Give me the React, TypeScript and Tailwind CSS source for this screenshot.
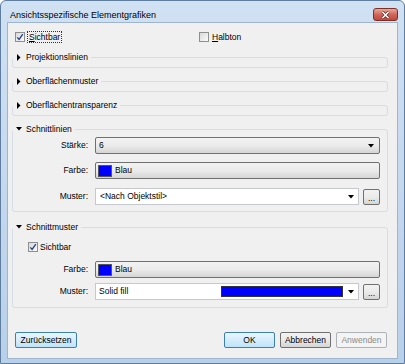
import React from "react";

function Check({ checked }: { checked?: boolean }) {
  return (
    <span className="flex h-[10px] w-[10px] shrink-0 items-center justify-center border border-[#8e8f8f] bg-gradient-to-br from-[#d9d9d9] to-[#fbfbfb]">
      {checked && (
        <svg width="8" height="8" viewBox="0 0 8 8">
          <path d="M1.3 4.3 L3.1 6.4 L6.8 1.1" fill="none" stroke="#21418f" strokeWidth="1.3" />
        </svg>
      )}
    </span>
  );
}

function Arrow() {
  return (
    <svg width="6" height="4" viewBox="0 0 6 4" className="shrink-0">
      <path d="M0 0 H6 L3 3.5 Z" fill="#000" />
    </svg>
  );
}

function Group({
  title,
  open,
  children,
}: {
  title: string;
  open?: boolean;
  children?: React.ReactNode;
}) {
  return (
    <fieldset className="ml-[4px] mr-[9px] rounded-[3px] border border-[#d6dee5] px-0 pb-[4px]">
      <legend className="p-0">
        <div className="flex h-[12px] items-center bg-[#f0f0f0] pr-[3px]">
          <span className="flex h-[12px] w-[11px] items-center justify-center">
            {open ? (
              <svg width="6" height="4" viewBox="0 0 6 4">
                <path d="M0 0 H6 L3 3.5 Z" fill="#000" />
              </svg>
            ) : (
              <svg width="4" height="7" viewBox="0 0 4 7">
                <path d="M0 0 V7 L3.5 3.5 Z" fill="#000" />
              </svg>
            )}
          </span>
          <span className="ml-[2px] leading-[12px]">{title}</span>
        </div>
      </legend>
      {children}
    </fieldset>
  );
}

function Row({ label, children, className }: { label: string; children: React.ReactNode; className?: string }) {
  return (
    <div className={"flex h-[17px] items-center pr-[7px] " + (className ?? "")}>
      <div className="w-[75px] text-right">{label}</div>
      <div className="ml-[7px] flex h-full flex-1 items-center">{children}</div>
    </div>
  );
}

const btnGray =
  "border border-[#707070] rounded-[2px] bg-gradient-to-b from-[#f2f2f2] via-[#ebebeb] to-[#d5d5d5]";

function DotsButton() {
  return (
    <div className={"ml-[4px] flex h-[16px] w-[17px] items-end justify-center pb-[3px] leading-[6px] " + btnGray}>
      ...
    </div>
  );
}

function Swatch() {
  return <span className="h-[12px] w-[14px] border border-[#555] bg-[#0000ff]" />;
}

export default function App() {
  return (
    <div className="flex h-[364px] w-[405px] flex-col rounded-t-[6px] border border-[#5f7d9e] bg-gradient-to-b from-[#d0e1f3] to-[#b9d0ea] font-['Liberation_Sans',Arial,sans-serif] text-[8.5px] text-black">
      {/* title bar */}
      <div className="flex h-[21px] shrink-0 items-end justify-between pl-[9px] pr-[6px]">
        <span className="mb-[1px] text-[9px] leading-[12px]">Ansichtsspezifische Elementgrafiken</span>
        <div className="mb-[1px] flex h-[13px] w-[25px] items-center justify-center rounded-[3px] border border-[#7a3228] bg-gradient-to-b from-[#e9a89a] via-[#d0665a] to-[#c2473a]">
          <svg width="9" height="8" viewBox="0 0 9 8">
            <path d="M1.5 1 L7.5 7 M7.5 1 L1.5 7" stroke="#5b2a22" strokeWidth="3" />
            <path d="M1.5 1 L7.5 7 M7.5 1 L1.5 7" stroke="#fff" strokeWidth="1.6" />
          </svg>
        </div>
      </div>

      {/* client area */}
      <div className="mx-[6px] mb-[4px] flex flex-1 flex-col border border-[#9fb5cd] bg-[#f0f0f0]">
        <div className="mt-[8px] flex h-[12px] items-center">
          <div className="flex w-[191px] items-center pl-[7px]">
            <Check checked />
            <span className="ml-[2px] border border-dotted border-[#333] px-[1px] leading-[10px]">
              <u>S</u>ichtbar
            </span>
          </div>
          <div className="flex items-center">
            <Check />
            <span className="ml-[3px] leading-[10px]">
              <u>H</u>albton
            </span>
          </div>
        </div>

        <div className="mt-[8px]">
          <Group title="Projektionslinien" />
        </div>
        <div className="mt-[7px]">
          <Group title="Oberflächenmuster" />
        </div>
        <div className="mt-[7px]">
          <Group title="Oberflächentransparenz" />
        </div>

        <div className="mt-[7px]">
          <Group title="Schnittlinien" open>
            <div className="pb-[2px]">
              <Row label="Stärke:" className="mt-[2px]">
                <div className={"flex h-full flex-1 items-center justify-between pl-[3px] pr-[5px] " + btnGray}>
                  <span>6</span>
                  <Arrow />
                </div>
              </Row>
              <Row label="Farbe:" className="mt-[8px]">
                <div className={"flex h-full flex-1 items-center pl-[2px] " + btnGray}>
                  <Swatch />
                  <span className="ml-[3px]">Blau</span>
                </div>
              </Row>
              <Row label="Muster:" className="mt-[9px]">
                <div className="flex h-full flex-1 items-center justify-between border border-[#c5c9cf] bg-white pl-[4px] pr-[4px]">
                  <span>&lt;Nach Objektstil&gt;</span>
                  <Arrow />
                </div>
                <DotsButton />
              </Row>
            </div>
          </Group>
        </div>

        <div className="mt-[9px]">
          <Group title="Schnittmuster" open>
            <div className="pb-[3px]">
              <div className="mt-[8px] flex h-[12px] items-center pl-[15px]">
                <Check checked />
                <span className="ml-[2px]">Sichtbar</span>
              </div>
              <Row label="Farbe:" className="mt-[8px]">
                <div className={"flex h-full flex-1 items-center pl-[2px] " + btnGray}>
                  <Swatch />
                  <span className="ml-[3px]">Blau</span>
                </div>
              </Row>
              <Row label="Muster:" className="mt-[5px]">
                <div className="flex h-full flex-1 items-center border border-[#c5c9cf] bg-white pl-[3px] pr-[4px]">
                  <span className="w-[122px]">Solid fill</span>
                  <span className="h-[11px] w-[122px] border border-[#333] bg-[#0000ff]" />
                  <span className="ml-auto">
                    <Arrow />
                  </span>
                </div>
                <DotsButton />
              </Row>
            </div>
          </Group>
        </div>

        <div className="mt-[24px] flex h-[16px] items-stretch pl-[7px] pr-[10px]">
          <button className="w-[62px] rounded-[2px] border border-[#3c7fb1] bg-gradient-to-b from-[#eaf6fd] to-[#bde4f9]">
            Zurücksetzen
          </button>
          <button className="ml-auto w-[51px] rounded-[2px] border border-[#3c7fb1] bg-gradient-to-b from-[#eaf6fd] to-[#bde4f9]">
            OK
          </button>
          <button className={"ml-[5px] w-[51px] " + btnGray}>Abbrechen</button>
          <button className="ml-[5px] w-[51px] rounded-[2px] border border-[#adb2b5] bg-[#f4f4f4] text-[#8a8a8a]">
            Anwenden
          </button>
        </div>
      </div>
    </div>
  );
}
